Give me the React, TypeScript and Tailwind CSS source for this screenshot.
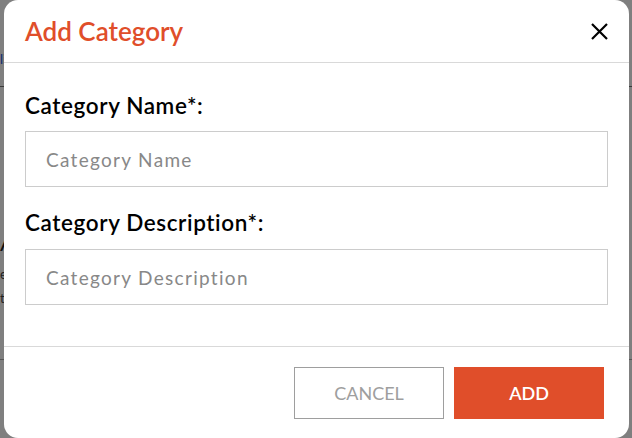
export default function App() {
  return (
    <div className="relative w-[632px] h-[438px] overflow-hidden bg-[#7f7f7f]" style={{ fontFamily: 'Lato, "Noto Sans", sans-serif' }}>
      {/* page behind the overlay */}
      <div className="absolute inset-0 text-[#111]">
        <div className="absolute left-0 top-[50px] text-[13px] text-[#0a2a6e]">link</div>
        <div className="absolute left-0 top-[86px] h-px w-full bg-[#3a3a3a]" />
        <div className="absolute left-0 top-[226px] text-[22px]">A</div>
        <div className="absolute left-0 top-[262px] text-[13px] leading-[24px] text-[#222]">
          <div>e</div>
          <div>t</div>
        </div>
        <div className="absolute left-0 top-[359px] h-px w-full bg-[#555]" />
      </div>

      {/* modal */}
      <div className="absolute left-[4px] top-0 flex h-[438px] w-[625px] flex-col rounded-[14px] bg-white">
        <div className="flex h-[63px] items-center justify-between border-b border-[#d9d9d9] pl-[21px] pr-[21px]">
          <h2 className="text-[26px] font-semibold text-[#e04e2a]">Add Category</h2>
          <svg width="17" height="17" viewBox="0 0 17 17" className="text-black">
            <path d="M1 1L16 16M16 1L1 16" stroke="currentColor" strokeWidth="2.2" />
          </svg>
        </div>

        <div className="flex flex-1 flex-col px-[21px] pt-[29px]">
          <label className="mb-[11px] text-[22.5px] font-semibold leading-[28px] tracking-[0.6px] text-black">Category Name*:</label>
          <input
            placeholder="Category Name"
            className="h-[56px] w-full border border-[#cccccc] px-[20px] text-[19px] tracking-[1.3px] outline-none placeholder:text-[#888]"
          />
          <label className="mb-[12px] mt-[22px] text-[22.5px] font-semibold leading-[28px] tracking-[0.6px] text-black">Category Description*:</label>
          <input
            placeholder="Category Description"
            className="h-[56px] w-full border border-[#cccccc] px-[20px] text-[19px] tracking-[1.3px] outline-none placeholder:text-[#888]"
          />
        </div>

        <div className="flex h-[92px] justify-end gap-[10px] border-t border-[#d9d9d9] pr-[25px] pt-[20px]">
          <button className="h-[52px] w-[150px] border border-[#9e9e9e] text-[18px] text-[#9e9e9e]">CANCEL</button>
          <button className="h-[52px] w-[150px] bg-[#e04e2a] text-[18px] font-semibold text-white">ADD</button>
        </div>
      </div>
    </div>
  );
}
